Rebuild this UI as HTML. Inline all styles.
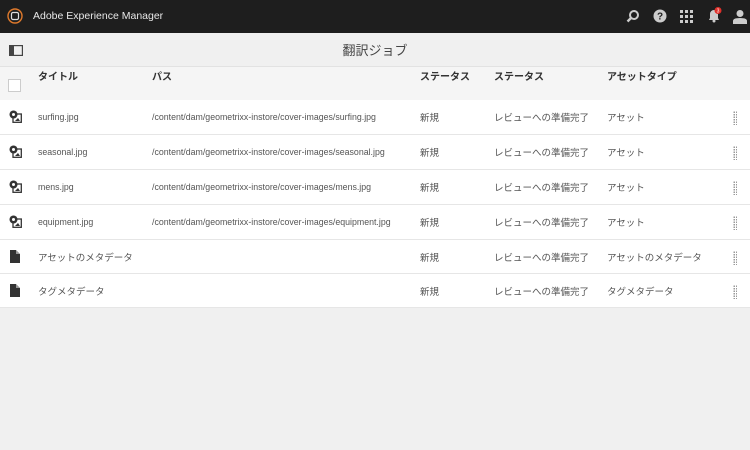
<!DOCTYPE html>
<html><head><meta charset="utf-8"><style>
*{margin:0;padding:0;box-sizing:border-box}
body{width:750px;height:450px;background:#f0f0f0;font-family:"Liberation Sans","Noto Sans CJK JP",sans-serif;position:relative;overflow:hidden}
.top{position:absolute;left:0;top:0;width:750px;height:33px;background:#1e1e1e;color:#e8e8e8}
.top .t{position:absolute;left:33px;top:10px;font-size:10.5px;line-height:12px}
.bar{position:absolute;top:33px;left:0;width:750px;height:34px;background:#f0f0f0;border-bottom:1px solid #e2e2e2}
.bar .h{position:absolute;left:0;width:750px;top:10px;text-align:center;font-size:13px;line-height:16px;color:#444}
.thead{position:absolute;top:67px;left:0;width:750px;height:33px;background:#f5f5f5;font-size:10px;color:#333;font-weight:bold}
.row{position:absolute;left:0;width:750px;height:35px;background:#fff;border-bottom:1px solid #e6e6e6;font-size:9.5px;color:#555}
.c{position:absolute;white-space:nowrap;line-height:12px;height:12px}
.l{font-size:8.8px}
.hd .c{top:5px}
.row .c{top:13px}
.row .c.l{top:11px}
.grip{position:absolute;left:733px;top:11px;width:4px;height:14px;background-image:radial-gradient(circle,#999 0.8px,transparent 1px);background-size:2.5px 2.5px}
</style></head><body>
<div class="top">
<svg style="position:absolute;left:7px;top:8px" width="16" height="16" viewBox="0 0 16 16"><circle cx="8" cy="8" r="7" fill="none" stroke="#e07a2c" stroke-width="1.4"/><rect x="4.5" y="4.5" width="7" height="7" rx="1.5" fill="none" stroke="#ddd" stroke-width="1.2"/></svg>
<div class="t">Adobe Experience Manager</div>
<svg style="position:absolute;left:626px;top:9px" width="14" height="14" viewBox="0 0 14 14"><circle cx="8" cy="6" r="4" fill="none" stroke="#ccc" stroke-width="2"/><path d="M5 9 L1.5 12.5" stroke="#ccc" stroke-width="2.4"/></svg>
<svg style="position:absolute;left:653px;top:9px" width="14" height="14" viewBox="0 0 14 14"><circle cx="7" cy="7" r="6.5" fill="#ccc"/><text x="7" y="10.5" font-size="10" font-weight="bold" text-anchor="middle" fill="#1e1e1e" font-family="Liberation Sans">?</text></svg>
<svg style="position:absolute;left:680px;top:10px" width="13" height="13" viewBox="0 0 13 13" fill="#ccc"><rect x="0" y="0" width="3" height="3"/><rect x="5" y="0" width="3" height="3"/><rect x="10" y="0" width="3" height="3"/><rect x="0" y="5" width="3" height="3"/><rect x="5" y="5" width="3" height="3"/><rect x="10" y="5" width="3" height="3"/><rect x="0" y="10" width="3" height="3"/><rect x="5" y="10" width="3" height="3"/><rect x="10" y="10" width="3" height="3"/></svg>
<svg style="position:absolute;left:706px;top:7px" width="16" height="16" viewBox="0 0 16 16"><path d="M3 13 L4 11 V7 A4 4 0 0 1 12 7 V11 L13 13 Z" fill="#ccc"/><circle cx="8" cy="14" r="1.5" fill="#ccc"/><circle cx="12" cy="3.5" r="3.5" fill="#e0302a"/><text x="12" y="5.5" font-size="5" text-anchor="middle" fill="#fff" font-family="Liberation Sans">3</text></svg>
<svg style="position:absolute;left:733px;top:9px" width="14" height="15" viewBox="0 0 14 15"><circle cx="7" cy="4.5" r="3.5" fill="#ccc"/><path d="M0 15 V12 Q0 9 7 9 Q14 9 14 12 V15Z" fill="#ccc"/></svg>
</div>
<div class="bar">
<svg style="position:absolute;left:9px;top:12px" width="14" height="11" viewBox="0 0 14 11"><rect x="0.6" y="0.6" width="12.8" height="9.8" fill="none" stroke="#444" stroke-width="1.2"/><rect x="1" y="1" width="4" height="9" fill="#444"/></svg>
<div class="h">翻訳ジョブ</div>
</div>
<div class="thead hd">
<div style="position:absolute;left:8px;top:12px;width:13px;height:13px;border:1px solid #ccc;background:#fff"></div>
<div class="c" style="left:38px">タイトル</div>
<div class="c" style="left:152px">パス</div>
<div class="c" style="left:420px">ステータス</div>
<div class="c" style="left:494px">ステータス</div>
<div class="c" style="left:607px">アセットタイプ</div>
</div>

<div class="row" style="top:100px"><svg style="position:absolute;left:9px;top:10px" width="13" height="13" viewBox="0 0 13 13"><rect x="4" y="4" width="8.3" height="8.3" fill="none" stroke="#333" stroke-width="1.3"/><circle cx="4.5" cy="4.5" r="4" fill="#333"/><circle cx="4.5" cy="4.5" r="1.5" fill="#fff"/><path d="M6 11 L9 8 L11 11Z" fill="#333"/></svg><div class="c l" style="left:38px">surfing.jpg</div><div class="c l" style="left:152px">/content/dam/geometrixx-instore/cover-images/surfing.jpg</div><div class="c" style="left:420px">新規</div><div class="c" style="left:494px">レビューへの準備完了</div><div class="c" style="left:607px">アセット</div><div class="grip"></div></div>
<div class="row" style="top:135px"><svg style="position:absolute;left:9px;top:10px" width="13" height="13" viewBox="0 0 13 13"><rect x="4" y="4" width="8.3" height="8.3" fill="none" stroke="#333" stroke-width="1.3"/><circle cx="4.5" cy="4.5" r="4" fill="#333"/><circle cx="4.5" cy="4.5" r="1.5" fill="#fff"/><path d="M6 11 L9 8 L11 11Z" fill="#333"/></svg><div class="c l" style="left:38px">seasonal.jpg</div><div class="c l" style="left:152px">/content/dam/geometrixx-instore/cover-images/seasonal.jpg</div><div class="c" style="left:420px">新規</div><div class="c" style="left:494px">レビューへの準備完了</div><div class="c" style="left:607px">アセット</div><div class="grip"></div></div>
<div class="row" style="top:170px"><svg style="position:absolute;left:9px;top:10px" width="13" height="13" viewBox="0 0 13 13"><rect x="4" y="4" width="8.3" height="8.3" fill="none" stroke="#333" stroke-width="1.3"/><circle cx="4.5" cy="4.5" r="4" fill="#333"/><circle cx="4.5" cy="4.5" r="1.5" fill="#fff"/><path d="M6 11 L9 8 L11 11Z" fill="#333"/></svg><div class="c l" style="left:38px">mens.jpg</div><div class="c l" style="left:152px">/content/dam/geometrixx-instore/cover-images/mens.jpg</div><div class="c" style="left:420px">新規</div><div class="c" style="left:494px">レビューへの準備完了</div><div class="c" style="left:607px">アセット</div><div class="grip"></div></div>
<div class="row" style="top:205px"><svg style="position:absolute;left:9px;top:10px" width="13" height="13" viewBox="0 0 13 13"><rect x="4" y="4" width="8.3" height="8.3" fill="none" stroke="#333" stroke-width="1.3"/><circle cx="4.5" cy="4.5" r="4" fill="#333"/><circle cx="4.5" cy="4.5" r="1.5" fill="#fff"/><path d="M6 11 L9 8 L11 11Z" fill="#333"/></svg><div class="c l" style="left:38px">equipment.jpg</div><div class="c l" style="left:152px">/content/dam/geometrixx-instore/cover-images/equipment.jpg</div><div class="c" style="left:420px">新規</div><div class="c" style="left:494px">レビューへの準備完了</div><div class="c" style="left:607px">アセット</div><div class="grip"></div></div>
<div class="row" style="top:240px;height:34px"><svg style="position:absolute;left:10px;top:10px" width="10" height="13" viewBox="0 0 10 13"><path d="M0 0 H6 L10 4 V13 H0Z" fill="#333"/><path d="M6 0 V4 H10" fill="#fff" opacity=".5"/></svg><div class="c" style="left:38px">アセットのメタデータ</div><div class="c" style="left:420px">新規</div><div class="c" style="left:494px">レビューへの準備完了</div><div class="c" style="left:607px">アセットのメタデータ</div><div class="grip"></div></div>
<div class="row" style="top:274px;height:34px"><svg style="position:absolute;left:10px;top:10px" width="10" height="13" viewBox="0 0 10 13"><path d="M0 0 H6 L10 4 V13 H0Z" fill="#333"/><path d="M6 0 V4 H10" fill="#fff" opacity=".5"/></svg><div class="c" style="left:38px">タグメタデータ</div><div class="c" style="left:420px">新規</div><div class="c" style="left:494px">レビューへの準備完了</div><div class="c" style="left:607px">タグメタデータ</div><div class="grip"></div></div>
</body></html>
